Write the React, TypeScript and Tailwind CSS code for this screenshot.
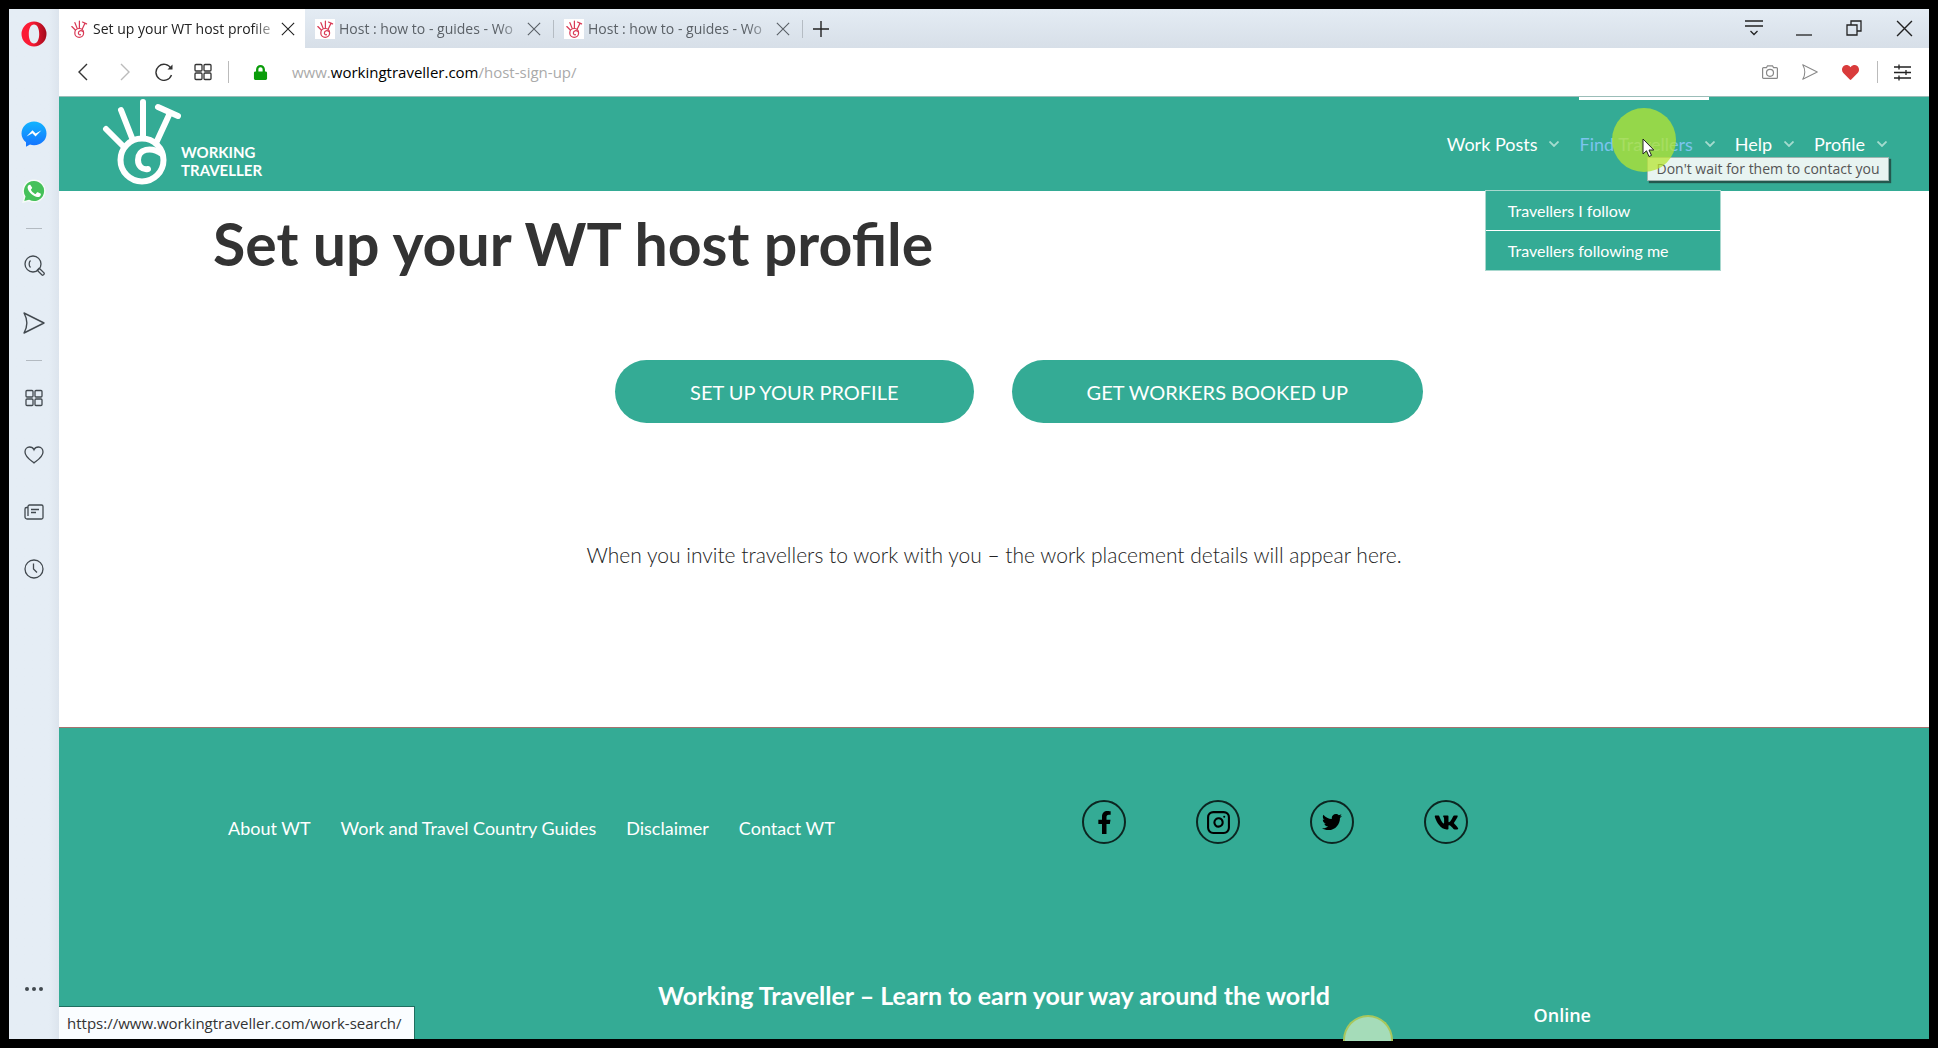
import React from "react";
import { FaFacebookF, FaTwitter, FaVk, FaHeart, FaLock } from "react-icons/fa";
import { FiInstagram } from "react-icons/fi";

const tabs = [
  { id: 1, title: "Set up your WT host profile", active: true },
  { id: 2, title: "Host : how to - guides - Wo", active: false },
  { id: 3, title: "Host : how to - guides - Wo", active: false },
];

const footerLinks = ["About WT", "Work and Travel Country Guides", "Disclaimer", "Contact WT"];

const socials = [
  { name: "Facebook", icon: <FaFacebookF size={23} /> },
  { name: "Instagram", icon: <FiInstagram size={25} /> },
  { name: "Twitter", icon: <FaTwitter size={20} /> },
  { name: "VK", icon: <FaVk size={25} /> },
];

function HandLogo({ className }: { className: string }) {
  return (
    <svg
      viewBox="0 0 80 88"
      className={className}
      fill="none"
      stroke="currentColor"
      strokeWidth="6"
      strokeLinecap="round"
      strokeLinejoin="round"
    >
      <path d="M5 32L22 49M20 13L31 41M42 5V39M68 18L56 44M57 10L77 19" />
      <circle cx="41" cy="63" r="21.5" />
      <path d="M61 57C50 49 37 52 37 63C37 69 41 73 47 72" />
    </svg>
  );
}

function CloseIcon({ size }: { size: number }) {
  return (
    <svg width={size} height={size} viewBox="0 0 16 16" stroke="currentColor" strokeWidth="1.3">
      <path d="M1 1L15 15M15 1L1 15" />
    </svg>
  );
}

function GridIcon() {
  return (
    <svg width="18" height="18" viewBox="0 0 18 18" fill="none" stroke="currentColor" strokeWidth="1.3">
      <rect x="1" y="1.5" width="7" height="6.5" rx="1" />
      <rect x="10" y="1.5" width="7" height="6.5" rx="1" />
      <rect x="1" y="10" width="7" height="6.5" rx="1" />
      <rect x="10" y="10" width="7" height="6.5" rx="1" />
    </svg>
  );
}

function SendIcon({ size }: { size: number }) {
  return (
    <svg
      width={size}
      height={size}
      viewBox="0 0 22 22"
      fill="none"
      stroke="currentColor"
      strokeWidth="1.4"
      strokeLinejoin="round"
    >
      <path d="M1 1L21 11L1 21C5 14 5 8 1 1Z" />
    </svg>
  );
}

function SidebarButton({ label, children }: { label: string; children: React.ReactNode }) {
  return (
    <button aria-label={label} className="flex h-[57px] w-full items-center justify-center">
      {children}
    </button>
  );
}

function SidebarDivider() {
  return (
    <div className="flex h-[18px] items-center">
      <div className="h-px w-4 bg-[#b3bac1]" />
    </div>
  );
}

function Sidebar() {
  return (
    <aside className="flex w-[50px] shrink-0 flex-col items-center bg-gradient-to-r from-[#e5edf5] from-80% to-[#dce4ed] text-[#42494f]">
      <button aria-label="Opera menu" className="mt-3 mb-[58px]">
        <svg width="26" height="26" viewBox="0 0 26 26">
          <defs>
            <linearGradient id="opera" x1="0" y1="0" x2="1" y2="0">
              <stop offset="0.4" stopColor="#fb1b35" />
              <stop offset="1" stopColor="#a30a1c" />
            </linearGradient>
          </defs>
          <path
            fill="url(#opera)"
            fillRule="evenodd"
            d="M13 .5a12.5 12.5 0 1 0 0 25a12.5 12.5 0 1 0 0-25zM13 3.500c3.300 0 5.200 4.200 5.200 9.500s-1.900 9.500-5.200 9.500s-5.200-4.200-5.200-9.500s1.900-9.500 5.200-9.500z"
          />
        </svg>
      </button>

      <SidebarButton label="Messenger">
        <svg width="26" height="26" viewBox="0 0 26 26">
          <defs>
            <linearGradient id="messenger" x1="0" y1="0" x2="0" y2="1">
              <stop stopColor="#12b4ff" />
              <stop offset="1" stopColor="#1471ff" />
            </linearGradient>
          </defs>
          <path
            fill="url(#messenger)"
            d="M13 .5C6 .5.500 5.500.500 12.500c0 3.500 1.700 6.500 4.500 8.800v4.500l4-2.200c1.300.4 2.600.6 4 .6c7 0 12.500-5 12.500-11.700S20 .5 13 .5z"
          />
          <path fill="#fff" d="M5.500 15.500l6-6.200l3.200 3.200l5.800-3.200l-6 6.200l-3.100-3.200z" />
        </svg>
      </SidebarButton>
      <SidebarButton label="WhatsApp">
        <svg width="24" height="24" viewBox="0 0 24 24">
          <path
            fill="#45c15a"
            stroke="#f6fbf7"
            strokeWidth="1.5"
            d="M12 1.200a10.800 10.800 0 0 0-9.300 16.300L1.200 23l5.700-1.500A10.800 10.800 0 1 0 12 1.200z"
          />
          <path
            fill="#fff"
            d="M8.700 6.400c-.3-.7-.6-.7-1-.7c-.9 0-2.100 1-2.100 2.900c0 4 6 9.500 10 9.500c2.200 0 3.300-1.400 3.300-2.900c0-.4-.1-.5-.5-.7l-2.600-1.200c-.4-.2-.6-.1-.9.300l-1 1.200c-.3.300-.5.300-.9.100c-1.700-.8-3.200-2.200-4-3.800c-.2-.4 0-.6.200-.8l.8-1c.2-.3.2-.5.100-.8z"
          />
        </svg>
      </SidebarButton>
      <SidebarDivider />
      <SidebarButton label="Search">
        <svg width="21" height="21" viewBox="0 0 21 21" fill="none" stroke="currentColor" strokeWidth="1.300">
          <circle cx="9" cy="9" r="8" />
          <path d="M6.500 5.500C4.700 7.200 4.700 10.800 6.500 12.500M13.200 15.200L15.200 13.200L20 17.800C20.800 19 19.200 20.800 18 20Z" />
        </svg>
      </SidebarButton>
      <SidebarButton label="My Flow">
        <SendIcon size={22} />
      </SidebarButton>
      <SidebarDivider />
      <SidebarButton label="Speed Dial">
        <GridIcon />
      </SidebarButton>
      <SidebarButton label="Bookmarks">
        <svg width="20" height="18" viewBox="0 0 20 18" fill="none" stroke="currentColor" strokeWidth="1.300">
          <path d="M10 17C7 14.500 1 11 1 6C1 3 3 1 5.500 1C7.500 1 9.300 2.200 10 3.800C10.700 2.200 12.500 1 14.500 1C17 1 19 3 19 6C19 11 13 14.500 10 17Z" />
        </svg>
      </SidebarButton>
      <SidebarButton label="News">
        <svg width="20" height="16" viewBox="0 0 20 16" fill="none" stroke="currentColor" strokeWidth="1.300">
          <path d="M4 12V2.500A1.500 1.500 0 0 1 5.500 1H17.500A1.500 1.500 0 0 1 19 2.500V13.500A1.500 1.500 0 0 1 17.500 15H3A2 2 0 0 1 1 13V5A1.500 1.500 0 0 1 2.500 3.500H4M7 5.500H15M7 8.500H12" />
        </svg>
      </SidebarButton>
      <SidebarButton label="History">
        <svg width="20" height="20" viewBox="0 0 20 20" fill="none" stroke="currentColor" strokeWidth="1.300">
          <circle cx="10" cy="10" r="9" />
          <path d="M9.500 4.500V10L13 13.500" />
        </svg>
      </SidebarButton>

      <button aria-label="Sidebar setup" className="mt-auto mb-12">
        <svg width="20" height="4" viewBox="0 0 20 4" fill="currentColor">
          <circle cx="3" cy="2" r="2" />
          <circle cx="10" cy="2" r="2" />
          <circle cx="17" cy="2" r="2" />
        </svg>
      </button>
    </aside>
  );
}

function TabStrip() {
  return (
    <div className="flex h-[39px] items-center bg-gradient-to-b from-[#e4ecf4] to-[#d7dfe8] text-sm text-[#5b6167]">
      {tabs.map((tab) => (
        <div
          key={tab.id}
          className={
            tab.active
              ? "flex h-full w-[246px] items-center bg-white pr-2.5 pl-2.5 text-[#222]"
              : "flex h-full w-[249px] items-center pl-2.5"
          }
        >
          <span className="flex size-5 shrink-0 items-center justify-center bg-white text-[#d93a56]">
            <HandLogo className="size-[18px]" />
          </span>
          <a
            href="#tab"
            className="ml-1 flex-1 whitespace-nowrap [mask-image:linear-gradient(to_right,#000_85%,transparent)]"
          >
            {tab.title}
          </a>
          <button aria-label="Close tab">
            <CloseIcon size={14} />
          </button>
          {!tab.active && <div className="ml-3 h-[18px] w-px bg-[#b5bcc3]" />}
        </div>
      ))}
      <button aria-label="New tab" className="ml-2.5 text-[#222]">
        <svg width="16" height="16" viewBox="0 0 16 16" stroke="currentColor" strokeWidth="1.400">
          <path d="M8 0V16M0 8H16" />
        </svg>
      </button>

      <div className="ml-auto flex text-[#222]">
        <button aria-label="Tab menu" className="flex w-[50px] justify-center">
          <svg width="18" height="16" viewBox="0 0 18 16" fill="none" stroke="currentColor" strokeWidth="1.300">
            <path d="M0 1H18M0 6H18M5.500 11L9 14.500L12.500 11" />
          </svg>
        </button>
        <button aria-label="Minimize" className="flex w-[50px] justify-center">
          <svg width="16" height="16" viewBox="0 0 16 16" stroke="currentColor" strokeWidth="1.300">
            <path d="M0 15H16" />
          </svg>
        </button>
        <button aria-label="Restore" className="flex w-[50px] justify-center">
          <svg width="16" height="16" viewBox="0 0 16 16" fill="none" stroke="currentColor" strokeWidth="1.300">
            <path d="M1 5H11V15H1ZM5 5V1H15V11H11" />
          </svg>
        </button>
        <button aria-label="Close window" className="flex w-[50px] justify-center">
          <CloseIcon size={17} />
        </button>
      </div>
    </div>
  );
}

function AddressBar() {
  return (
    <div className="flex h-[49px] items-center border-b border-[#9bbdb8] bg-white pr-[18px] pl-[18px] text-[#333]">
      <button aria-label="Back">
        <svg width="11" height="18" viewBox="0 0 11 18" fill="none" stroke="currentColor" strokeWidth="1.400">
          <path d="M10 1L2 9L10 17" />
        </svg>
      </button>
      <button aria-label="Forward" className="ml-8 text-[#bbb]">
        <svg width="11" height="18" viewBox="0 0 11 18" fill="none" stroke="currentColor" strokeWidth="1.400">
          <path d="M1 1L9 9L1 17" />
        </svg>
      </button>
      <button aria-label="Reload" className="ml-6">
        <svg width="19" height="18" viewBox="0 0 19 18" fill="none" stroke="currentColor" strokeWidth="1.400">
          <path d="M16.500 12A8 8 0 1 1 16 5.500" />
          <path d="M17.500 1.500V6.500H12.500Z" fill="currentColor" stroke="none" />
        </svg>
      </button>
      <button aria-label="Speed Dial" className="ml-5">
        <GridIcon />
      </button>
      <div className="ml-4 h-[22px] w-px bg-[#bbb]" />
      <FaLock size={15} className="ml-6 text-[#0a9c0a]" />
      <a href="#url" className="ml-6 text-[15px] text-[#aaa]">
        www.<span className="text-black">workingtraveller.com</span>/host-sign-up/
      </a>

      <div className="ml-auto flex items-center text-[#888]">
        <button aria-label="Snapshot">
          <svg width="16" height="14" viewBox="0 0 16 14" fill="none" stroke="currentColor" strokeWidth="1.200">
            <path d="M.6 3.600A1 1 0 0 1 1.600 2.600H4.500L5.500 .8H10.500L11.500 2.600H14.400A1 1 0 0 1 15.400 3.600V12.400A1 1 0 0 1 14.400 13.400H1.600A1 1 0 0 1 .6 12.400Z" />
            <circle cx="8" cy="7.800" r="3.500" />
          </svg>
        </button>
        <button aria-label="Send to My Flow" className="ml-6">
          <SendIcon size={16} />
        </button>
        <button aria-label="Bookmark page" className="ml-6">
          <FaHeart size={17} className="text-[#d93b3b]" />
        </button>
        <div className="ml-[18px] h-[22px] w-px bg-[#bbb]" />
        <button aria-label="Easy setup" className="ml-4 text-[#222]">
          <svg width="17" height="17" viewBox="0 0 17 17" stroke="currentColor" strokeWidth="1.300">
            <path d="M0 3H17M0 8.500H17M0 14H17M5 .5V5.500M12 6V11M5 11.500V16.500" />
          </svg>
        </button>
      </div>
    </div>
  );
}

function NavItem({ label, active, children }: { label: string; active?: boolean; children?: React.ReactNode }) {
  return (
    <li className="relative flex h-full items-center">
      {active && <div className="absolute top-0 right-1.5 left-0 h-[3px] bg-white" />}
      <a href="#nav" className={active ? "text-[#7cc4ee]" : "text-white"}>
        {label}
      </a>
      <svg
        width="10"
        height="6"
        viewBox="0 0 10 6"
        fill="none"
        stroke="currentColor"
        strokeWidth="1.800"
        className="ml-3 text-[#a5dccf]"
      >
        <path d="M.5 .5L5 5L9.500 .5" />
      </svg>
      {children}
    </li>
  );
}

function SiteHeader() {
  return (
    <header className="flex h-[94px] items-start justify-between bg-[#34ab95] pr-[42px] pl-[42px] font-[Lato,sans-serif]">
      <a href="#home" className="flex items-end text-white">
        <HandLogo className="h-[88px] w-20" />
        <span className="mb-1.5 text-[15px] leading-[18px] font-bold">
          WORKING
          <br />
          TRAVELLER
        </span>
      </a>

      <nav className="h-full">
        <ul className="flex h-full gap-5 text-lg">
          <NavItem label="Work Posts" />
          <NavItem label="Find Travellers" active>
            <ul className="absolute top-[93px] -right-1.5 z-10 w-[236px] divide-y divide-white border border-[#a8d8ce] bg-[#34ab95] text-base text-white">
              <li>
                <a href="#follow" className="block px-[22px] py-2 leading-[23px]">
                  Travellers I follow
                </a>
              </li>
              <li>
                <a href="#following" className="block px-[22px] py-2 leading-[23px]">
                  Travellers following me
                </a>
              </li>
            </ul>
            <div
              role="tooltip"
              className="absolute top-[60px] left-[68px] z-20 border border-[#9fb5b1] bg-[#e8f4f1] px-2 font-[Open_Sans,sans-serif] text-sm leading-[22px] whitespace-nowrap text-[#555] shadow-[2px_2px_1px_#24574e]"
            >
              Don't wait for them to contact you
            </div>
            {/* pointer with its highlight */}
            <div className="pointer-events-none absolute top-[11px] left-[33px] z-30 size-16 rounded-full bg-[#b6e632]/75" />
            <svg
              width="13"
              height="20"
              viewBox="0 0 13 20"
              className="pointer-events-none absolute top-[41px] left-[63px] z-30"
            >
              <path d="M1 1V16L4.500 12.800L7 18.500L9.500 17.400L7 12H11.800Z" fill="#fff" stroke="#222" />
            </svg>
          </NavItem>
          <NavItem label="Help" />
          <NavItem label="Profile" />
        </ul>
      </nav>
    </header>
  );
}

function SiteFooter() {
  return (
    <footer className="relative flex-1 overflow-hidden border-t border-[#a5736f] bg-[#34ab95] text-white">
      <div className="mt-[72px] grid grid-cols-2 items-center">
        <ul className="flex gap-[30px] pt-3 pl-[169px] text-lg whitespace-nowrap">
          {footerLinks.map((link) => (
            <li key={link}>
              <a href="#footer">{link}</a>
            </li>
          ))}
        </ul>
        <ul className="flex gap-[70px] pl-[88px] text-black">
          {socials.map((social) => (
            <li key={social.name}>
              <a
                href="#social"
                aria-label={social.name}
                className="flex size-11 items-center justify-center rounded-full border-2 border-[#0c2621]"
              >
                {social.icon}
              </a>
            </li>
          ))}
        </ul>
      </div>
      <h2 className="mt-[135px] text-center text-[25px] leading-8 font-bold">
        Working Traveller – Learn to earn your way around the world
      </h2>
    </footer>
  );
}

export default function App() {
  return (
    <div className="relative flex min-h-screen bg-black p-[9px] font-[Open_Sans,sans-serif]">
      <Sidebar />
      <div className="relative flex min-w-0 flex-1 flex-col bg-white">
        <TabStrip />
        <AddressBar />
        <div className="flex flex-1 flex-col font-[Lato,sans-serif]">
          <SiteHeader />
          <main className="pb-[156px]">
            <h1 className="pt-[18px] pl-[154px] text-[59px] leading-[70px] font-bold text-[#333]">
              Set up your WT host profile
            </h1>
            <div className="mt-[81px] ml-[50px] flex justify-center gap-[38px] text-xl text-white">
              <button className="h-[63px] rounded-full bg-[#34ab95] px-[75px]">SET UP YOUR PROFILE</button>
              <button className="h-[63px] rounded-full bg-[#34ab95] px-[75px]">GET WORKERS BOOKED UP</button>
            </div>
            <p className="mt-[116px] text-center text-[21px] leading-8 font-light text-[#222]">
              When you invite travellers to work with you – the work placement details will appear here.
            </p>
          </main>
          <SiteFooter />
        </div>

        {/* browser status text */}
        <div className="absolute bottom-0 left-0 border-t border-r border-[#1f6f60] bg-[#fafdff] pr-3 pl-2 text-[15px] leading-8 text-[#333]">
          https://www.workingtraveller.com/work-search/
        </div>
        <div className="absolute right-[338px] bottom-3 text-lg leading-6 font-semibold text-white">Online</div>
        <div className="absolute right-[536px] bottom-[-2px] h-[26px] w-[50px] rounded-t-full border-2 border-b-0 border-[#a9c75c] bg-[#a5dcb9]" />
      </div>
    </div>
  );
}
